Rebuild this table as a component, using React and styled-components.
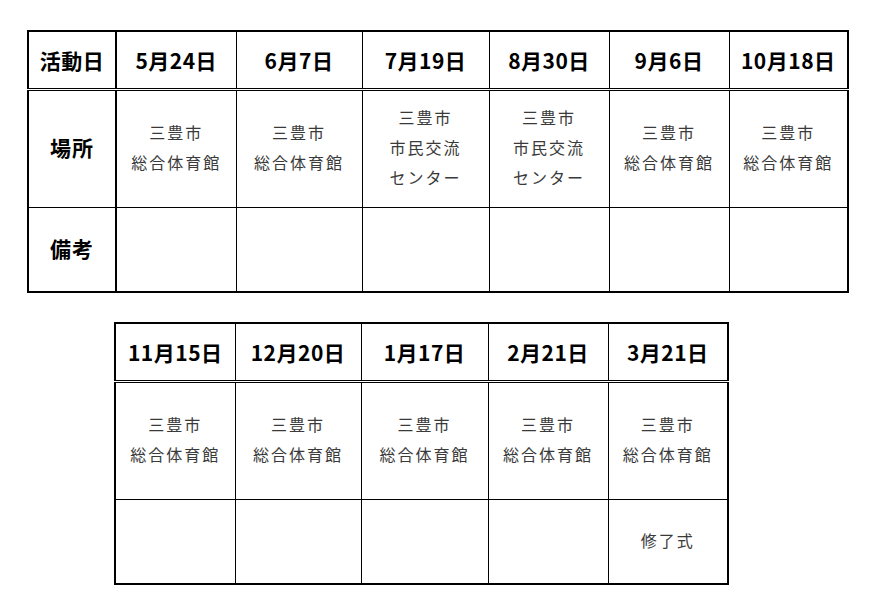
import React from 'react';
import styled, { createGlobalStyle } from 'styled-components';

const GlobalStyle = createGlobalStyle`
  html, body {
    margin: 0;
    padding: 0;
    background: #ffffff;
  }
  body {
    font-family: "Noto Sans CJK JP", "Noto Sans", sans-serif;
  }
`;

const Page = styled.div`
  width: 876px;
  height: 615px;
  padding: 30px 0 0 27px;
  box-sizing: border-box;
  display: flex;
  flex-direction: column;
  gap: 29px;
`;

const Table = styled.table`
  border-collapse: collapse;
  table-layout: fixed;
  width: ${p => p.$width}px;
  border: 2px solid #000;
  margin-left: ${p => p.$offset || 0}px;
`;

const HeadCell = styled.th`
  height: 56px;
  padding: 0;
  border: 1px solid #000;
  border-bottom: 3px double #000;
  border-right-width: ${p => (p.$label ? 2 : 1)}px;
  font-size: 21px;
  font-weight: 700;
  color: #000;
  letter-spacing: 0.5px;
  text-align: center;
  vertical-align: middle;
  white-space: nowrap;
`;

const LabelCell = styled.th`
  height: ${p => p.$h - 4}px;
  padding: 0 0 4px;
  border: 1px solid #000;
  border-right-width: 2px;
  font-size: 21px;
  font-weight: 700;
  color: #000;
  letter-spacing: 1px;
  text-align: center;
  vertical-align: middle;
`;

const Cell = styled.td`
  height: ${p => p.$h - 4}px;
  padding: 0 0 4px;
  border: 1px solid #000;
  font-size: 16px;
  font-weight: 400;
  line-height: 30px;
  color: #3a3a3a;
  letter-spacing: 2px;
  text-align: center;
  vertical-align: middle;
`;

const Line = styled.div`
  white-space: nowrap;
`;

const gym = ['三豊市', '総合体育館'];
const center = ['三豊市', '市民交流', 'センター'];

const first = [
  { date: '5月24日', place: gym, w: 120 },
  { date: '6月7日', place: gym, w: 126 },
  { date: '7月19日', place: center, w: 127 },
  { date: '8月30日', place: center, w: 120 },
  { date: '9月6日', place: gym, w: 120 },
  { date: '10月18日', place: gym, w: 119 },
];

const second = [
  { date: '11月15日', place: gym, w: 120 },
  { date: '12月20日', place: gym, w: 126 },
  { date: '1月17日', place: gym, w: 127 },
  { date: '2月21日', place: gym, w: 120 },
  { date: '3月21日', place: gym, w: 120, note: '修了式' },
];

function Place({ lines }) {
  return lines.map(l => <Line key={l}>{l}</Line>);
}

function Schedule({ items, withLabels, offset }) {
  const labelWidth = withLabels ? 88 : 0;
  const width = items.reduce((s, it) => s + it.w, labelWidth);
  return (
    <Table $offset={offset} $width={width}>
      <colgroup>
        {withLabels && <col style={{ width: labelWidth }} />}
        {items.map(it => <col key={it.date} style={{ width: it.w }} />)}
      </colgroup>
      <tbody>
        <tr>
          {withLabels && <HeadCell $label>活動日</HeadCell>}
          {items.map(it => <HeadCell key={it.date}>{it.date}</HeadCell>)}
        </tr>
        <tr>
          {withLabels && <LabelCell $h={116}>場所</LabelCell>}
          {items.map(it => (
            <Cell key={it.date} $h={116}><Place lines={it.place} /></Cell>
          ))}
        </tr>
        <tr>
          {withLabels && <LabelCell $h={83}>備考</LabelCell>}
          {items.map(it => (
            <Cell key={it.date} $h={83}>{it.note || ''}</Cell>
          ))}
        </tr>
      </tbody>
    </Table>
  );
}

export default function App() {
  return (
    <>
      <GlobalStyle />
      <Page>
        <Schedule items={first} withLabels />
        <Schedule items={second} offset={87} />
      </Page>
    </>
  );
}
